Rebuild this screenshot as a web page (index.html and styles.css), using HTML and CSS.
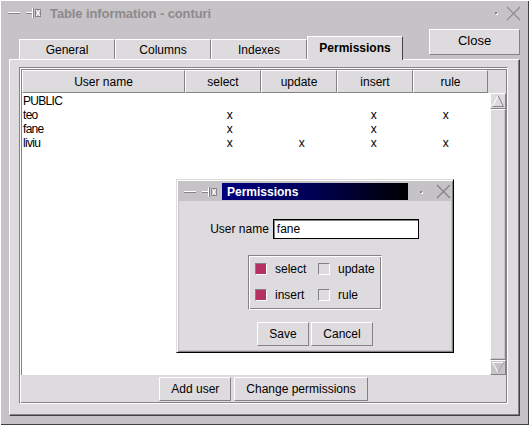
FILE: index.html
```html
<!DOCTYPE html>
<html>
<head>
<meta charset="utf-8">
<link rel="stylesheet" href="styles.css">
</head>
<body>
<div class="win">
  <div class="titlebar">
    <svg class="tb-icons" width="34" height="12" viewBox="0 0 34 12">
      <rect x="0" y="5" width="12" height="1" fill="#fff"/>
      <rect x="0" y="6" width="12" height="1" fill="#848284"/>
      <rect x="18" y="5" width="6" height="1" fill="#fff"/>
      <rect x="18" y="6" width="6" height="1" fill="#848284"/>
      <rect x="24" y="1" width="1" height="10" fill="#fff"/>
      <rect x="25" y="1" width="1" height="10" fill="#848284"/>
      <rect x="27.5" y="2.5" width="5" height="7" fill="none" stroke="#848284"/>
      <path d="M28 3 L32 9 M32 3 L28 9" stroke="#fff" stroke-width="1"/>
    </svg>
    <span class="title">Table information - conturi</span>
    <span class="dot"></span>
    <svg class="xbtn" width="15" height="15" viewBox="0 0 15 15">
      <path d="M1 1 L14 14 M14 1 L1 14" stroke="#8c8a8c" stroke-width="1.2"/>
    </svg>
  </div>

  <div class="tabrow">
    <div class="tabs">
      <div class="tab">General</div>
      <div class="tab">Columns</div>
      <div class="tab">Indexes</div>
      <div class="tab active">Permissions</div>
    </div>
    <div class="btn close">Close</div>
  </div>

  <div class="panel">
    <div class="frame">
      <div class="list">
        <div class="head">
          <div class="hcell">User name</div>
          <div class="hcell">select</div>
          <div class="hcell">update</div>
          <div class="hcell">insert</div>
          <div class="hcell">rule</div>
        </div>
        <div class="lbody">
          <div class="rows">
            <div class="row"><span class="name">PUBLIC</span><span class="c c1"></span><span class="c c2"></span><span class="c c3"></span><span class="c c4"></span></div>
            <div class="row"><span class="name">teo</span><span class="c c1">x</span><span class="c c2"></span><span class="c c3">x</span><span class="c c4">x</span></div>
            <div class="row"><span class="name">fane</span><span class="c c1">x</span><span class="c c2"></span><span class="c c3">x</span><span class="c c4"></span></div>
            <div class="row"><span class="name">liviu</span><span class="c c1">x</span><span class="c c2">x</span><span class="c c3">x</span><span class="c c4">x</span></div>
          </div>
          <div class="vscroll">
            <div class="sbtn">
              <svg width="14" height="14" viewBox="0 0 14 14"><path d="M7 1.5 L1.5 12.5" stroke="#fff"/><path d="M7 1.5 L12.5 12.5 L1.5 12.5" stroke="#848284" fill="none"/></svg>
            </div>
            <div class="thumb"></div>
            <div class="sbtn">
              <svg width="14" height="13" viewBox="0 0 14 13"><path d="M1.5 1.5 L12.5 1.5 M1.5 1.5 L7 11.5" stroke="#fff" fill="none"/><path d="M12.5 1.5 L7 11.5" stroke="#848284" stroke-dasharray="1 1"/></svg>
            </div>
          </div>
        </div>
      </div>
      <div class="actions">
        <div class="btn">Add user</div>
        <div class="btn">Change permissions</div>
      </div>
    </div>
  </div>

  <div class="dialog">
    <div class="dtitle">
      <svg class="tb-icons" width="34" height="12" viewBox="0 0 34 12">
        <rect x="0" y="5" width="12" height="1" fill="#fff"/>
        <rect x="0" y="6" width="12" height="1" fill="#848284"/>
        <rect x="18" y="5" width="6" height="1" fill="#fff"/>
        <rect x="18" y="6" width="6" height="1" fill="#848284"/>
        <rect x="24" y="1" width="1" height="10" fill="#fff"/>
        <rect x="25" y="1" width="1" height="10" fill="#848284"/>
        <rect x="27.5" y="2.5" width="5" height="7" fill="none" stroke="#848284"/>
        <path d="M28 3 L32 9 M32 3 L28 9" stroke="#fff" stroke-width="1"/>
      </svg>
      <div class="dcaption">Permissions</div>
      <span class="dot"></span>
      <svg class="xbtn" width="15" height="15" viewBox="0 0 15 15">
        <path d="M1 1 L14 14 M14 1 L1 14" stroke="#848284" stroke-width="1.2"/>
      </svg>
    </div>
    <div class="dbody">
      <div class="field">
        <span class="flabel">User name</span>
        <div class="input">fane</div>
      </div>
      <div class="group">
        <div class="chk"><span class="box on"></span>select</div>
        <div class="chk"><span class="box"></span>update</div>
        <div class="chk"><span class="box on"></span>insert</div>
        <div class="chk"><span class="box"></span>rule</div>
      </div>
      <div class="dactions">
        <div class="btn dbtn save">Save</div>
        <div class="btn dbtn cancel">Cancel</div>
      </div>
    </div>
  </div>
</div>
</body>
</html>
```

FILE: styles.css
```css
* { box-sizing: border-box; }
html, body { margin: 0; padding: 0; }
body {
  width: 529px;
  height: 425px;
  overflow: hidden;
  font-family: "Liberation Sans", Arial, sans-serif;
  font-size: 12px;
  color: #000;
  background: #c6c3c6;
}
.win {
  position: relative;
  width: 529px;
  height: 425px;
  background: #c6c3c6;
  box-shadow: inset 1px 1px 0 #fff, inset -1px -1px 0 #424142;
  display: flex;
  flex-direction: column;
}

/* title bar */
.titlebar {
  height: 26px;
  display: flex;
  align-items: center;
  padding: 0 8px 0 8px;
}
.tb-icons { flex: none; }
.title {
  margin-left: 8px;
  font-size: 13px;
  font-weight: bold;
  color: #8c8a8c;
  letter-spacing: -0.1px;
  flex: 1;
}
.dot {
  width: 2px;
  height: 2px;
  background: #848284;
  box-shadow: 1px 1px 0 #fff;
  margin-right: 9px;
  flex: none;
}
.xbtn { flex: none; }

/* tabs */
.tabrow {
  height: 33px;
  display: flex;
  align-items: flex-end;
}
.tabs {
  display: flex;
  align-items: flex-end;
  margin-left: 19px;
}
.tab {
  width: 96px;
  height: 20px;
  background: #dedbde;
  border-top: 1px solid #fff;
  border-left: 1px solid #fff;
  border-right: 1px solid #848284;
  display: flex;
  align-items: center;
  justify-content: center;
  padding-top: 1px;
}
.tab.active {
  height: 24px;
  margin-bottom: -1px;
  font-weight: bold;
  position: relative;
  z-index: 2;
  border-right: 1px solid #424142;
  padding-top: 0;
  padding-bottom: 1px;
}
.btn {
  background: #dedbde;
  border-top: 1px solid #fff;
  border-left: 1px solid #fff;
  border-right: 1px solid #848284;
  border-bottom: 1px solid #848284;
  display: flex;
  align-items: center;
  justify-content: center;
  height: 24px;
  padding: 0 11px;
  white-space: nowrap;
}
.close {
  align-self: flex-start;
  margin-top: 3px;
  margin-left: auto;
  margin-right: 9px;
  width: 91px;
  height: 26px;
  font-size: 13px;
  padding-bottom: 3px;
}

/* panel */
.panel {
  margin-left: 9px;
  width: 511px;
  height: 357px;
  background: #dedbde;
  border-top: 1px solid #fff;
  border-left: 1px solid #fff;
  border-right: 1px solid #424142;
  border-bottom: 1px solid #424142;
  box-shadow: inset -1px -1px 0 #848284;
  padding: 7px 11px 11px 9px;
  display: flex;
  position: relative;
  z-index: 1;
}
.frame {
  flex: 1;
  border: 1px solid;
  border-color: #848284 #fff #fff #848284;
  box-shadow: inset 1px 1px 0 #fff, inset -1px -1px 0 #848284;
  padding: 1px;
  display: flex;
  flex-direction: column;
}
.list {
  height: 306px;
  border-top: 1px solid #848284;
  border-left: 1px solid #848284;
  display: flex;
  flex-direction: column;
}
.head {
  height: 23px;
  display: grid;
  grid-template-columns: 163px 76px 76px 76px 75px;
  background: #dedbde;
}
.hcell {
  border-top: 1px solid #fff;
  border-left: 1px solid #fff;
  border-right: 1px solid #848284;
  border-bottom: 1px solid #848284;
  box-shadow: 1px 0 0 #dedbde;
  display: flex;
  align-items: center;
  justify-content: center;
}
.lbody {
  flex: 1;
  display: flex;
}
.rows {
  flex: 1;
  background: #fff;
  padding-top: 1px;
}
.row {
  display: grid;
  grid-template-columns: 163px 76px 76px 76px 75px;
  height: 14px;
  line-height: 14px;
  font-size: 12px;
  letter-spacing: -0.7px;
}
.name { padding-left: 1px; }
.c { text-align: center; }
.c1 { padding-left: 13px; }
.c2 { padding-left: 5px; }
.c3 { padding-right: 3px; }
.c4 { padding-right: 10px; }

.vscroll {
  width: 16px;
  background: #dedbde;
  display: flex;
  flex-direction: column;
}
.sbtn {
  height: 16px;
  display: flex;
  align-items: center;
  justify-content: center;
  border-top: 1px solid #fff;
  border-left: 1px solid #fff;
  border-right: 1px solid #848284;
  border-bottom: 1px solid #848284;
}
.sbtn:last-child { height: 15px; background: #c6c3c6; }
.thumb {
  flex: 1;
  border-top: 1px solid #fff;
  border-left: 1px solid #fff;
  border-right: 1px solid #848284;
  border-bottom: 1px solid #848284;
  box-shadow: inset -1px -1px 0 #c6c3c6;
}
.actions {
  flex: 1;
  display: flex;
  align-items: center;
  justify-content: center;
  gap: 3px;
  padding-top: 1px;
}

/* dialog */
.dialog {
  position: absolute;
  left: 176px;
  top: 179px;
  width: 278px;
  height: 174px;
  z-index: 5;
  background: #c6c3c6;
  border: 1px solid;
  border-color: #dedbde #000 #000 #dedbde;
  box-shadow: inset 1px 1px 0 #fff, inset -1px -1px 0 #848284;
  padding: 2px;
  display: flex;
  flex-direction: column;
}
.dtitle {
  height: 19px;
  display: flex;
  align-items: center;
  padding-left: 5px;
}
.dcaption {
  margin-left: 4px;
  width: 186px;
  height: 17px;
  background: linear-gradient(to right, #000080 0%, #00005a 45%, #000 100%);
  color: #fff;
  font-weight: bold;
  font-size: 12px;
  padding-left: 5px;
  display: flex;
  align-items: center;
  margin-right: 12px;
}
.dtitle .dot { margin-right: 14px; }
.dbody {
  flex: 1;
  background: #dedbde;
  display: flex;
  flex-direction: column;
  align-items: center;
  padding-top: 18px;
}
.field {
  display: flex;
  align-items: center;
  gap: 4px;
  padding-right: 1px;
}
.input {
  width: 146px;
  height: 20px;
  background: #fff;
  border: 1px solid #000;
  box-shadow: inset 1px 1px 0 #848284;
  padding-left: 3px;
  display: flex;
  align-items: center;
}
.group {
  margin-top: 16px;
  width: 134px;
  height: 55px;
  border: 1px solid;
  border-color: #848284 #fff #fff #848284;
  box-shadow: inset 1px 1px 0 #fff, inset -1px -1px 0 #848284;
  padding: 7px 4px 7px 6px;
  display: grid;
  grid-template-columns: 63px auto;
  grid-template-rows: 12px 12px;
  row-gap: 14px;
}
.chk {
  display: flex;
  align-items: center;
  gap: 8px;
  height: 12px;
  white-space: nowrap;
}
.box {
  width: 12px;
  height: 12px;
  flex: none;
  background: #dedbde;
  border: 1px solid;
  border-color: #848284 #fff #fff #848284;
}
.box.on { background: #b53063; }
.dactions {
  margin-top: 12px;
  display: flex;
  gap: 2px;
}
.dbtn { height: 24px; }
.save { width: 52px; }
.cancel { width: 62px; }
```
